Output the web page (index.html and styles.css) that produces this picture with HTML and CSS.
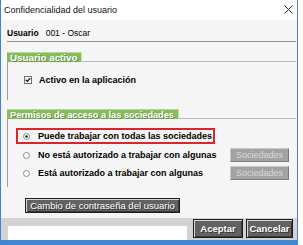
FILE: index.html
```html
<!DOCTYPE html>
<html lang="es">
<head>
<meta charset="utf-8">
<title>Confidencialidad del usuario</title>
<link rel="stylesheet" href="styles.css">
</head>
<body>
<div class="window">
  <div class="titlebar">
    <span class="title">Confidencialidad del usuario</span>
    <svg class="close" width="9" height="9" viewBox="0 0 9 9"><path d="M0.5 0.5 L8.5 8.5 M8.5 0.5 L0.5 8.5" stroke="#222" stroke-width="1" fill="none"/></svg>
  </div>
  <div class="content">
    <div class="user-row"><span class="user-label">Usuario</span><span class="user-value">001 - Oscar</span></div>

    <div class="group">
      <div class="group-head"><span class="tab tab-active">Usuario activo</span><span class="rule"></span></div>
      <div class="group-body body-active">
        <div class="opt">
          <svg class="check" width="8" height="8" viewBox="0 0 8 8"><rect x="0.5" y="0.5" width="7" height="7" fill="#fff" stroke="#6f6f6f"/><path d="M1.8 3.8 L3.3 5.4 L6.3 2.2" stroke="#111" stroke-width="1.3" fill="none"/></svg>
          <span>Activo en la aplicación</span>
        </div>
      </div>
    </div>

    <div class="group group-perm">
      <div class="group-head"><span class="tab tab-perm">Permisos de acceso a las sociedades</span><span class="rule"></span></div>
      <div class="group-body body-perm">
        <div class="opt radio-row selected">
          <svg class="radio" width="7" height="7" viewBox="0 0 7 7"><circle cx="3.5" cy="3.5" r="3" fill="#fff" stroke="#8a8a8a"/><circle cx="3.5" cy="3.5" r="1.2" fill="#111"/></svg>
          <span>Puede trabajar con todas las sociedades</span>
        </div>
        <div class="opt radio-row">
          <svg class="radio" width="7" height="7" viewBox="0 0 7 7"><circle cx="3.5" cy="3.5" r="3" fill="#fff" stroke="#8a8a8a"/></svg>
          <span>No está autorizado a trabajar con algunas</span>
          <button class="btn disabled">Sociedades</button>
        </div>
        <div class="opt radio-row">
          <svg class="radio" width="7" height="7" viewBox="0 0 7 7"><circle cx="3.5" cy="3.5" r="3" fill="#fff" stroke="#8a8a8a"/></svg>
          <span>Está autorizado a trabajar con algunas</span>
          <button class="btn disabled">Sociedades</button>
        </div>
      </div>
    </div>

    <button class="btn dark cambio">Cambio de contraseña del usuario</button>
  </div>
  <div class="footer">
    <div class="input"></div>
    <button class="btn dark bold ok">Aceptar</button>
    <button class="btn dark bold cancel">Cancelar</button>
  </div>
</div>
</body>
</html>
```

FILE: styles.css
```css
* { box-sizing: border-box; }
html, body { margin: 0; padding: 0; }
body {
  background: #ffffff;
  font-family: "Liberation Sans", Arial, sans-serif;
  color: #000;
  width: 303px;
  height: 245px;
  overflow: hidden;
}
.window {
  width: 298px;
  height: 245px;
  border-left: 1px solid #3a86d4;
  border-right: 1px solid #3a86d4;
  border-bottom: 5px solid #3f87cf;
  display: flex;
  flex-direction: column;
  background: #f5f5f5;
}
.titlebar {
  height: 20px;
  background: #ffffff;
  display: flex;
  align-items: center;
  justify-content: space-between;
  padding: 0 4px 0 3px;
}
.title {
  font-size: 9px;
  color: #111;
}
.close { display: block; margin-top: -1px; }
.content {
  flex: 1;
  padding: 0 1px 0 6px;
  display: flex;
  flex-direction: column;
  align-items: stretch;
}
.user-row {
  padding-top: 7px;
  padding-bottom: 2px;
  line-height: 12px;
  font-size: 8.5px;
  border-bottom: 1px solid #8e8e8e;
  display: flex;
  gap: 7px;
}
.user-label { font-weight: bold; }
.group { display: flex; flex-direction: column; margin-top: 10px; }
.group-perm { margin-top: 9px; }
.group-head {
  display: flex;
  height: 10px;
}
.tab {
  background: #86bc5c;
  color: #fff;
  font-weight: bold;
  line-height: 10px;
  padding: 0 0 0 3px;
  border-top: 1px solid #b5d99a;
  border-right: 1px solid #c8e2b4;
  text-shadow: 1px 1px 0 rgba(40, 80, 20, 0.45);
  white-space: nowrap;
  overflow: hidden;
}
.tab-active { width: 75px; font-size: 9.8px; }
.tab-perm { width: 172px; font-size: 9.2px; }
.rule {
  flex: 1;
  border-bottom: 1px solid #b9b9b9;
}
.group-body {
  border-left: 1px solid #9c9c9c;
}
.body-active {
  height: 38px;
  padding: 12px 0 0 16px;
}
.body-perm {
  height: 68px;
  padding-top: 9px;
  display: flex;
  flex-direction: column;
  gap: 4px;
}
.opt {
  display: flex;
  align-items: center;
  font-size: 9px;
  font-weight: bold;
  height: 12px;
  white-space: nowrap;
}
.check { display: block; margin-right: 7px; flex: none; }
.radio { display: block; margin-right: 8px; flex: none; }
.radio-row {
  height: 14px;
  padding-left: 15px;
  padding-right: 7px;
}
.radio-row.selected {
  height: 16px;
  width: 199px;
  margin-left: 8px;
  padding-left: 5px;
  border: 2px solid #d8262f;
}
.btn {
  font-family: "Liberation Sans", Arial, sans-serif;
  padding: 0;
  margin: 0;
  display: flex;
  align-items: center;
  justify-content: center;
  white-space: nowrap;
}
.disabled {
  margin-left: auto;
  width: 59px;
  height: 14px;
  font-size: 9px;
  font-weight: normal;
  background: #a3a3a3;
  color: #d9d9d9;
  border: 1px solid;
  border-color: #c9c9c9 #7c7c7c #7c7c7c #c9c9c9;
}
.dark {
  background: #626262;
  color: #fff;
  border: 1px solid #1e1e1e;
  box-shadow: inset 1px 1px 0 #d8d8d8, inset -1px -1px 0 #3a3a3a;
  text-shadow: 1px 1px 0 rgba(0, 0, 0, 0.5);
}
.cambio {
  margin-top: 11px;
  margin-left: 18px;
  width: 155px;
  height: 15px;
  font-size: 9.5px;
  align-self: flex-start;
}
.footer {
  height: 22px;
  background: #d3d3d3;
  display: flex;
  align-items: flex-start;
  padding-top: 1px;
  margin-top: 5px;
}
.input {
  margin-top: 7px;
  margin-left: 7px;
  width: 179px;
  height: 14px;
  background: #fff;
}
.bold { font-weight: bold; font-size: 9.5px; }
.ok { margin-left: 6px; width: 50px; height: 19px; }
.cancel { margin-left: 3px; width: 47px; height: 19px; }
```
